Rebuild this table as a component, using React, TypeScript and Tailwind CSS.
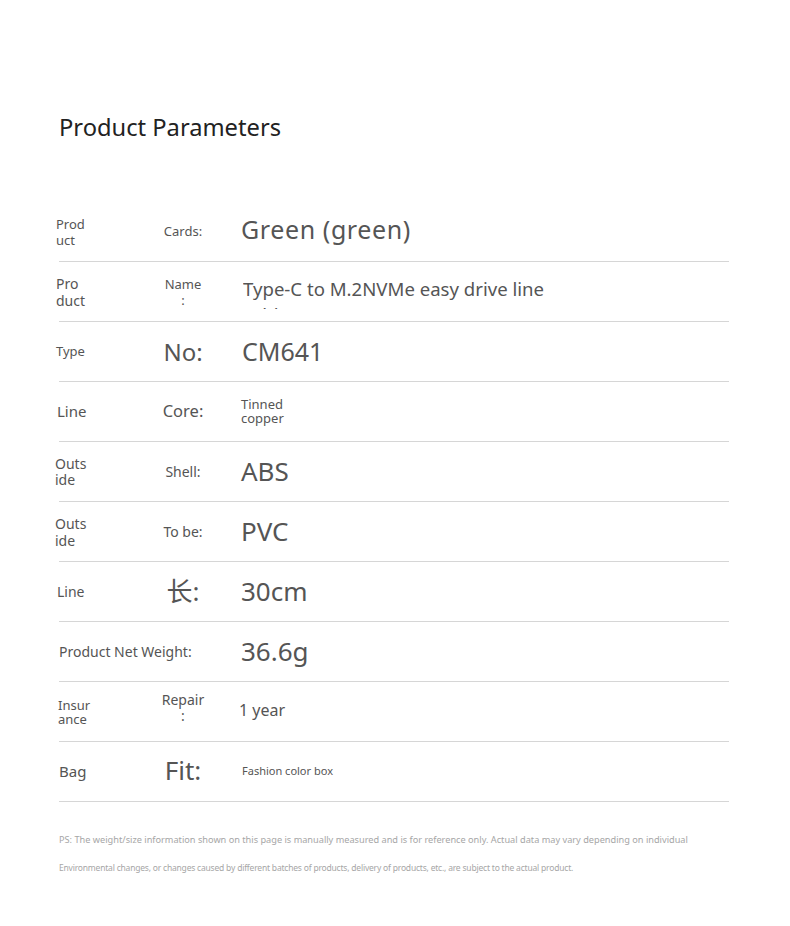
export default function App() {
  return (
    <div className="w-[790px] h-[926px] bg-white text-[#555] font-['Noto_Sans','Noto_Sans_CJK_SC',sans-serif]">
      <h1 className="pl-[59px] pt-[111px] text-[23.7px] leading-[32px] text-[#222]">Product Parameters</h1>

      <div className="mt-[59px] ml-[59px] w-[670px]">
        <Row
          a={<span className="text-[13px] leading-[16px]">Prod<br />uct</span>}
          b={<span className="text-[13px]">Cards:</span>}
          c={<span className="mt-[-3px] text-[25px] tracking-[0.6px]">Green (green)</span>}
        />
        <Row
          a={<span className="text-[14px] leading-[17px]">Pro<br />duct</span>}
          b={<span className="text-[13px] leading-[16px]">Name<br />:</span>}
          c={
            <div className="ml-[2px] mt-[2px] h-[33px] w-[330px] overflow-hidden text-[18.6px] leading-[26px]">
              Type-C to M.2NVMe easy drive line cable
            </div>
          }
        />
        <Row
          a={<span className="text-[13px]">Type</span>}
          b={<span className="text-[24px]">No:</span>}
          c={<span className="ml-[1px] mt-[1px] text-[25px]">CM641</span>}
        />
        <Row
          a={<span className="ml-[1px] text-[15px]">Line</span>}
          b={<span className="text-[16.5px]">Core:</span>}
          c={<span className="mt-[-2px] text-[13px] leading-[14px]">Tinned<br />copper</span>}
        />
        <Row
          a={<span className="ml-[-1px] text-[14px] leading-[16px]">Outs<br />ide</span>}
          b={<span className="text-[14px]">Shell:</span>}
          c={<span className="text-[26px]">ABS</span>}
        />
        <Row
          a={<span className="ml-[-1px] text-[14px] leading-[17px]">Outs<br />ide</span>}
          b={<span className="text-[14px]">To be:</span>}
          c={<span className="text-[26px]">PVC</span>}
        />
        <Row
          a={<span className="ml-[1px] text-[14px]">Line</span>}
          b={<span className="text-[26px]">长:</span>}
          c={<span className="text-[26px]">30cm</span>}
        />
        <div className="flex h-[60px] items-center border-b border-[#d6d6d6]">
          <span className="w-[182px] text-[14px]">Product Net Weight:</span>
          <span className="text-[26px]">36.6g</span>
        </div>
        <Row
          a={<span className="ml-[2px] text-[13px] leading-[14px]">Insur<br />ance</span>}
          b={<span className="mt-[-7px] text-[14px] leading-[16px]">Repair<br />:</span>}
          c={<span className="ml-[-2px] mt-[-3px] text-[16px]">1 year</span>}
        />
        <Row
          a={<span className="ml-[3px] text-[15px]">Bag</span>}
          b={<span className="mt-[-3px] text-[26px]">Fit:</span>}
          c={<span className="ml-[1px] text-[11px]">Fashion color box</span>}
        />
      </div>

      <div className="ml-[59px] mt-[30px] text-[#a6a6a6]">
        <p className="text-[9.2px] leading-[16px]">
          PS: The weight/size information shown on this page is manually measured and is for reference only. Actual data may vary depending on individual
        </p>
        <p className="mt-[12px] text-[8.5px] leading-[16px] tracking-[-0.2px]">
          Environmental changes, or changes caused by different batches of products, delivery of products, etc., are subject to the actual product.
        </p>
      </div>
    </div>
  )
}

function Row({ a, b, c }: { a: React.ReactNode; b: React.ReactNode; c: React.ReactNode }) {
  return (
    <div className="flex h-[60px] items-center border-b border-[#d6d6d6]">
      <div className="ml-[-3px] flex w-[94px]">{a}</div>
      <div className="flex w-[66px] justify-center text-center">{b}</div>
      <div className="ml-[25px] flex">{c}</div>
    </div>
  )
}
